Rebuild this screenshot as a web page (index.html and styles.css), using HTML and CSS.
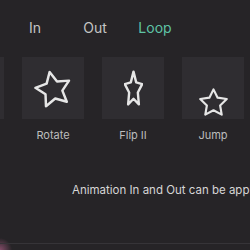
FILE: index.html
```html
<!DOCTYPE html>
<html>
<head>
  <meta charset="utf-8">
  <link rel="stylesheet" href="styles.css">
</head>
<body>
  <div class="panel">
    <div class="tabs">
      <span class="tab">In</span>
      <span class="tab">Out</span>
      <span class="tab active">Loop</span>
    </div>

    <div class="presets">
      <div class="preset">
        <div class="thumb"></div>
      </div>
      <div class="preset">
        <div class="thumb">
          <svg class="star rotate" width="38" height="36" viewBox="1.6 1.6 20.8 19.9">
            <polygon points="12,2.5 14.94,8.46 21.51,9.41 16.76,14.05 17.88,20.59 12,17.5 6.12,20.59 7.24,14.05 2.49,9.41 9.06,8.46"/>
          </svg>
        </div>
        <span class="name">Rotate</span>
      </div>
      <div class="preset">
        <div class="thumb">
          <svg class="star flip" width="19" height="36" viewBox="1.6 1.6 20.8 19.9" preserveAspectRatio="none">
            <polygon vector-effect="non-scaling-stroke" points="12,2.5 14.94,8.46 21.51,9.41 16.76,14.05 17.88,20.59 12,17.5 6.12,20.59 7.24,14.05 2.49,9.41 9.06,8.46"/>
          </svg>
        </div>
        <span class="name">Flip II</span>
      </div>
      <div class="preset">
        <div class="thumb low">
          <svg class="star jump" width="29" height="28" viewBox="1.6 1.6 20.8 19.9">
            <polygon points="12,2.5 14.94,8.46 21.51,9.41 16.76,14.05 17.88,20.59 12,17.5 6.12,20.59 7.24,14.05 2.49,9.41 9.06,8.46"/>
          </svg>
        </div>
        <span class="name">Jump</span>
      </div>
    </div>

    <p class="hint">Animation In and Out can be applied together, Loop cannot</p>
  </div>
</body>
</html>
```

FILE: styles.css
```css
body {
  margin: 0;
  width: 250px;
  height: 250px;
  overflow: hidden;
  font-family: Inter, "Liberation Sans", sans-serif;
  background:
    radial-gradient(circle at 0 250px, rgba(210, 110, 160, 0.55), rgba(210, 110, 160, 0) 12px),
    #262427;
}

.panel {
  height: 243px;
  border-bottom: 1px solid #363438;
  overflow: hidden;
}

.tabs {
  display: grid;
  grid-template-columns: repeat(3, 60px);
  padding: 19px 0 0 5px;
  height: 38px;
  box-sizing: border-box;
}

.tab {
  text-align: center;
  font-size: 14px;
  line-height: 18px;
  color: #c4c4c4;
}

.tab.active {
  color: #5ec3a5;
}

.presets {
  display: flex;
  align-items: flex-start;
  gap: 18px;
  margin-top: 19px;
  margin-left: -58px;
}

.preset {
  display: flex;
  flex-direction: column;
  align-items: center;
  gap: 9px;
  flex: none;
}

.thumb {
  width: 62px;
  height: 62px;
  background-color: #2f2d31;
  display: flex;
  align-items: center;
  justify-content: center;
}

.thumb.low {
  align-items: flex-start;
  padding-top: 31px;
  box-sizing: border-box;
}

.star polygon {
  fill: none;
  stroke: #e6e6e6;
  stroke-linejoin: round;
}

.star.rotate {
  transform: rotate(-12deg);
}

.star.rotate polygon {
  stroke-width: 1.37;
}

.star.flip polygon {
  stroke-width: 2.4;
}

.star.jump polygon {
  stroke-width: 1.55;
}

.name {
  font-size: 11px;
  line-height: 14px;
  color: #bdbdbd;
}

.hint {
  margin: 41px 0 0 72px;
  white-space: nowrap;
  font-size: 11.5px;
  line-height: 14px;
  color: #d6d6d6;
}
```
